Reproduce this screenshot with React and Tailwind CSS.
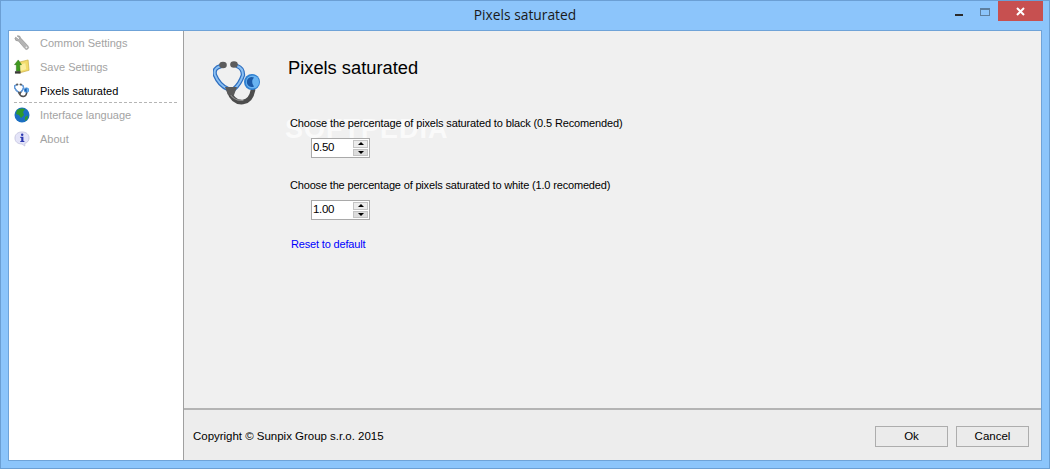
import React from 'react';

const SANS = "font-['Liberation_Sans',Arial,sans-serif]";

function Wrench() {
  return (
    <svg width="16" height="16" viewBox="0 0 18 18">
      <path d="M2 2.5 L5 5 L6.5 3.5 L3.5 1 Q7 0 7.5 3.5 L15.5 12 Q17.5 14 15.5 15.8 Q13.5 17.2 12 15 L5 6.8 Q1 7 1 3.5 Z" fill="#b4b4b4" stroke="#8a8a8a" strokeWidth="0.7" />
      <circle cx="14" cy="14" r="1" fill="#eee" />
    </svg>
  );
}

function SaveIcon() {
  return (
    <svg width="16" height="16" viewBox="0 0 17 17">
      <path d="M3 4 L15 1 L16 12 L5 15 Z" fill="#f3dc6b" stroke="#c7a93c" strokeWidth="0.7" />
      <path d="M5 6 L12 4.5 L13 11 L6 13 Z" fill="#fbee9d" />
      <path d="M4.5 1 L8 6 L6 6 L6.5 13 L2.5 13 L2.5 6 L0.5 6 Z" fill="#3f9a1f" stroke="#246b10" strokeWidth="0.5" />
      <path d="M1 13 L7 13 L7 15.5 L1 15.5 Z" fill="#3a3a3a" />
    </svg>
  );
}

function Stethoscope({ size }) {
  return (
    <svg width={size} height={size} viewBox="0 0 50 50">
      <g fill="none" strokeLinecap="round" strokeLinejoin="round">
        <path d="M8 6 Q0 8 2 15 Q6 25 15 29" stroke="#2f6fc0" strokeWidth="4.4" />
        <path d="M8 6 Q0 8 2 15 Q6 25 15 29" stroke="#8cc0f2" strokeWidth="2" />
        <path d="M24 6 Q30 8 30 15 Q27 24 21 29" stroke="#2f6fc0" strokeWidth="4.4" />
        <path d="M24 6 Q30 8 30 15 Q27 24 21 29" stroke="#8cc0f2" strokeWidth="2" />
        <path d="M16 31 Q20 43 30 42 Q38 41 40 30" stroke="#4d4d4d" strokeWidth="4.6" />
        <path d="M17 34 Q21 41 30 40.5" stroke="#8a8a8a" strokeWidth="1.1" />
      </g>
      <path d="M12 27 L24 27 L21 35 L15 35 Z" fill="#5a5a5a" />
      <ellipse cx="10" cy="5" rx="3.8" ry="3.2" fill="#5c5c5c" />
      <ellipse cx="21" cy="4.5" rx="3.8" ry="3.2" fill="#5c5c5c" />
      <circle cx="39" cy="22" r="8" fill="#2f7fd0" />
      <circle cx="39.5" cy="22" r="6.6" fill="#69b4f2" />
      <path d="M41 17.5 A5 5 0 1 0 41 26.5 A6.5 6.5 0 0 1 41 17.5 Z" fill="#1c5aa8" />
    </svg>
  );
}

function Globe() {
  return (
    <svg width="16" height="16" viewBox="0 0 16 16">
      <circle cx="8" cy="8" r="7.5" fill="#1c6fc2" />
      <path d="M3 3 Q7 0.5 11 2 L9 5 L10 8 L7 11 L5 8 L2 7 Z" fill="#2f9a2c" />
      <path d="M11 10 L14 8.5 L13.5 12 L11 14 Z" fill="#2f9a2c" />
    </svg>
  );
}

function InfoBubble() {
  return (
    <svg width="16" height="16" viewBox="0 0 17 17">
      <path d="M8.5 1 C13 1 16 3.5 16 7.5 C16 10.5 14 12.5 11.5 13.2 L11.5 16 L8.5 13.8 C3.5 13.8 1 11 1 7.5 C1 3.5 4 1 8.5 1 Z" fill="#e4e4f8" stroke="#b9b9d8" strokeWidth="0.7" />
      <circle cx="8.7" cy="3.9" r="1.3" fill="#2c38b0" />
      <path d="M6.7 6.2 L10 6.2 L10 10.6 L11 10.6 L11 11.8 L6.7 11.8 L6.7 10.6 L7.7 10.6 L7.7 7.4 L6.7 7.4 Z" fill="#2c38b0" />
    </svg>
  );
}

function NavItem({ icon, label, active, divider }) {
  return (
    <div className="h-6 flex items-center relative">
      <div className="w-[31px] pl-[5px] flex items-center">{icon}</div>
      <span className={active ? 'text-black' : 'text-[#a3a3a3]'}>{label}</span>
      {divider && <div className="absolute left-[5px] right-[6px] bottom-0 border-b border-dashed border-[#b5b5b5]" />}
    </div>
  );
}

function Spinner({ value }) {
  return (
    <div className="ml-[23px] w-[59px] h-[20px] bg-white border border-[#a9a9a9] flex items-center justify-between pl-[1px] pr-[1px]">
      <span className="text-black text-[11.5px] tracking-[-0.3px] leading-none">{value}</span>
      <div className="w-[15px] h-[16px] flex flex-col gap-px">
        <div className="flex-1 bg-[#ececec] border border-[#c4c4c4] flex items-center justify-center">
          <div className="w-0 h-0 border-x-[3px] border-x-transparent border-b-[3px] border-b-black" />
        </div>
        <div className="flex-1 bg-[#dcdcdc] border border-[#c4c4c4] flex items-center justify-center">
          <div className="w-0 h-0 border-x-[3px] border-x-transparent border-t-[3px] border-t-black" />
        </div>
      </div>
    </div>
  );
}

function FooterButton({ label }) {
  return (
    <button className="w-[73px] h-[21px] bg-[#ebebeb] border border-[#adadad] text-[11.5px] text-black flex items-center justify-center">
      {label}
    </button>
  );
}

export default function App() {
  return (
    <div className={`w-[1050px] h-[469px] bg-[#8cc5fb] border border-[#6b9fd4] flex flex-col overflow-hidden text-[12px] ${SANS}`}>
      {/* Title bar */}
      <div className="h-[29px] shrink-0 relative flex items-center justify-center">
        <span className="text-[13.8px] text-[#1a1a1a] font-['Open_Sans',sans-serif]">Pixels saturated</span>
        <div className="absolute top-0 right-[6px] flex items-start">
          <div className="w-[27px] h-5 flex items-end justify-center pb-[5px]">
            <div className="w-2 h-[2px] bg-[#2b2b2b]" />
          </div>
          <div className="w-[26px] h-5 flex items-center justify-center pt-[2px]">
            <div className="w-[10px] h-2 border border-[#5d7f9f] border-t-2" />
          </div>
          <div className="w-[45px] h-5 bg-[#c75050] flex items-center justify-center">
            <svg width="9" height="9" viewBox="0 0 9 9">
              <path d="M1 1 L8 8 M8 1 L1 8" stroke="#fff" strokeWidth="2" />
            </svg>
          </div>
        </div>
      </div>

      {/* Client area */}
      <div className="flex-1 flex mx-[7px] mb-[7px] border border-[#6fa3d8] min-h-0">
        <aside className="w-[175px] shrink-0 bg-white border-r border-[#a0a0a0] text-[11px]">
          <NavItem icon={<Wrench />} label="Common Settings" />
          <NavItem icon={<SaveIcon />} label="Save Settings" />
          <NavItem icon={<Stethoscope size={16} />} label="Pixels saturated" active divider />
          <NavItem icon={<Globe />} label="Interface language" />
          <NavItem icon={<InfoBubble />} label="About" />
        </aside>

        <main className="flex-1 bg-[#f0f0f0] flex flex-col relative min-w-0">
          {/* Faint watermark behind the form */}
          <span className="absolute left-[101px] top-[85px] text-[27px] font-bold tracking-[1px] leading-none text-white/70 pointer-events-none">SOFTPEDIA</span>

          <div className="flex-1 flex pl-[29px] pt-[25px] relative">
            <div className="w-[50px] h-[52px] mr-[25px] shrink-0 mt-[4px]">
              <Stethoscope size={50} />
            </div>
            <div>
              <h1 className="text-[18.3px] leading-[24px] text-black">Pixels saturated</h1>
              <p className="mt-[36px] ml-[2px] h-[15px] leading-[15px] text-[11px] tracking-[-0.14px] text-black">Choose the percentage of pixels saturated to black (0.5 Recomended)</p>
              <div className="mt-[7px]"><Spinner value="0.50" /></div>
              <p className="mt-[20px] ml-[2px] h-[15px] leading-[15px] text-[11px] tracking-[-0.17px] text-black">Choose the percentage of pixels saturated to white (1.0 recomeded)</p>
              <div className="mt-[7px]"><Spinner value="1.00" /></div>
              <a className="block mt-[17px] ml-[3px] text-[#0000ff] text-[11px] leading-[15px] tracking-[-0.17px]">Reset to default</a>
            </div>
          </div>

          <div className="h-[52px] shrink-0 border-t-2 border-[#b4b4b4] bg-[#ededed] flex items-center justify-between pl-[9px] pr-[12px] pt-[3px]">
            <span className="text-[11.5px] text-black tracking-[-0.02px]">Copyright © Sunpix Group s.r.o. 2015</span>
            <div className="flex gap-2">
              <FooterButton label="Ok" />
              <FooterButton label="Cancel" />
            </div>
          </div>
        </main>
      </div>
    </div>
  );
}
